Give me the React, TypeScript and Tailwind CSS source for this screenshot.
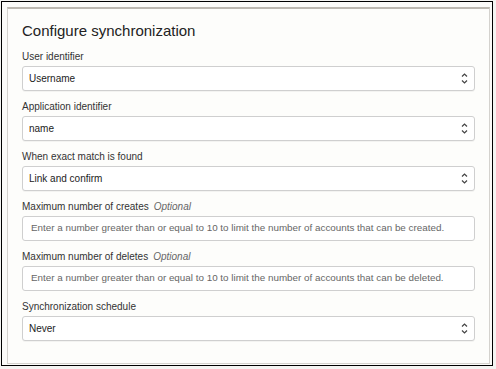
import React from 'react';

const font = { fontFamily: '"Liberation Sans", Arial, sans-serif' };

interface Field {
  label: string;
  optional?: boolean;
  kind: 'select' | 'input';
  value: string;
}

const fields: Field[] = [
  { label: 'User identifier', kind: 'select', value: 'Username' },
  { label: 'Application identifier', kind: 'select', value: 'name' },
  { label: 'When exact match is found', kind: 'select', value: 'Link and confirm' },
  {
    label: 'Maximum number of creates',
    optional: true,
    kind: 'input',
    value: 'Enter a number greater than or equal to 10 to limit the number of accounts that can be created.',
  },
  {
    label: 'Maximum number of deletes',
    optional: true,
    kind: 'input',
    value: 'Enter a number greater than or equal to 10 to limit the number of accounts that can be deleted.',
  },
  { label: 'Synchronization schedule', kind: 'select', value: 'Never' },
];

function UpDown() {
  return (
    <svg width="7" height="11" viewBox="0 0 7 11" className="shrink-0">
      <path d="M1 3.5 L3.5 1 L6 3.5" fill="none" stroke="#444" strokeWidth="1.2" />
      <path d="M1 7.5 L3.5 10 L6 7.5" fill="none" stroke="#444" strokeWidth="1.2" />
    </svg>
  );
}

function FieldRow({ field }: { field: Field }) {
  return (
    <div className="flex flex-col">
      <div className="h-[14px] leading-[14px] text-[10px] text-[#333] mb-[2px] whitespace-nowrap">
        {field.label}
        {field.optional && <span className="italic text-[#666] ml-[5px]">Optional</span>}
      </div>
      {field.kind === 'select' ? (
        <div className="h-[25px] flex items-center justify-between bg-white border border-[#cfcfcf] rounded-[3px] pl-[6px] pr-[6px] shadow-[0_1px_0_rgba(0,0,0,0.04)]">
          <span className="text-[10px] text-[#222]">{field.value}</span>
          <UpDown />
        </div>
      ) : (
        <div className="h-[25px] flex items-center bg-white border border-[#cfcfcf] rounded-[3px] pl-[8px] overflow-hidden">
          <span className="text-[9.85px] text-[#666] whitespace-nowrap">{field.value}</span>
        </div>
      )}
    </div>
  );
}

export default function App() {
  return (
    <div className="w-[496px] h-[369px] bg-[#f4f4f2] overflow-hidden" style={font}>
      <div className="ml-px mt-px w-[492px] h-[365px] border border-black bg-[#fbfbf9] pl-[5px] pt-[5px]">
        <div className="w-[483px] h-[357px] bg-[#fdfdfb] border border-[#d4d2ce] border-t-2 border-t-[#bcb8b1] px-[14px] pt-[13px]">
          <h1 className="h-[18px] leading-[18px] text-[15px] text-[#222] mb-[10px]">Configure synchronization</h1>
          <div className="flex flex-col gap-[9px]">
            {fields.map((f) => (
              <FieldRow key={f.label} field={f} />
            ))}
          </div>
        </div>
      </div>
    </div>
  );
}
